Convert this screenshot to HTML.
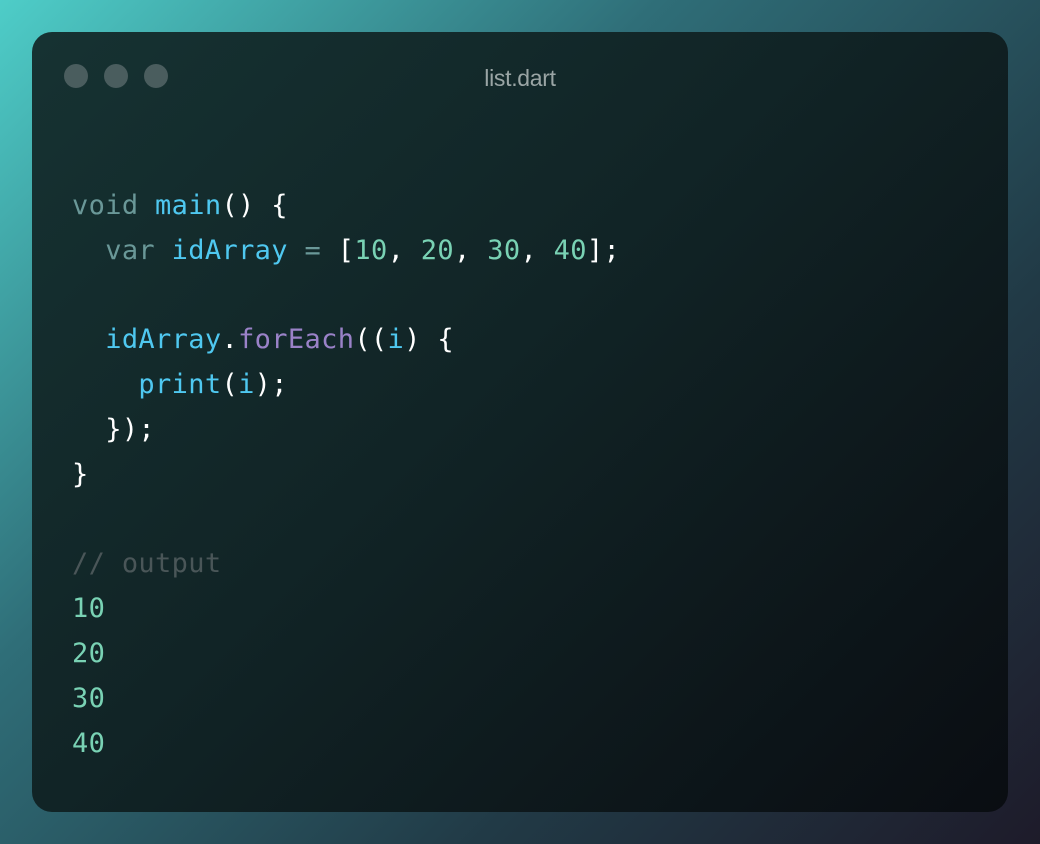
<!DOCTYPE html>
<html><head><style>
html,body{margin:0;padding:0;width:1040px;height:844px;overflow:hidden}
body{background:linear-gradient(135deg,#4ecdc8 0%,#2f6e78 35%,#213a46 70%,#1e1b2a 100%);position:relative}
.win{position:absolute;left:32px;top:32px;width:976px;height:780px;border-radius:20px;background:linear-gradient(135deg,#163232 0%,#112426 45%,#0a0d12 100%)}
.dot{position:absolute;top:32px;width:24px;height:24px;border-radius:50%;background:#4a5d5e}
.title{position:absolute;left:0;right:0;top:33px;text-align:center;font:23px "Liberation Sans",sans-serif;color:#9aa5a5;letter-spacing:-0.3px}
pre{position:absolute;left:40px;top:152px;margin:0;font:27px/44.8px "DejaVu Sans Mono","Liberation Mono",monospace;color:#fff;letter-spacing:0.35px}
.k{color:#6a9898}.f{color:#4fc8f0}.n{color:#79d2b4}.m{color:#9a82c8}.c{color:#4a5658}.o{color:#6a9898}
</style></head><body>
<div class="win">
<div class="dot" style="left:32px"></div><div class="dot" style="left:72px"></div><div class="dot" style="left:112px"></div>
<div class="title">list.dart</div>
<pre><span class="k">void</span> <span class="f">main</span>() {
  <span class="k">var</span> <span class="f">idArray</span> <span class="o">=</span> [<span class="n">10</span>, <span class="n">20</span>, <span class="n">30</span>, <span class="n">40</span>];

  <span class="f">idArray</span>.<span class="m">forEach</span>((<span class="f">i</span>) {
    <span class="f">print</span>(<span class="f">i</span>);
  });
}

<span class="c">// output</span>
<span class="n">10</span>
<span class="n">20</span>
<span class="n">30</span>
<span class="n">40</span></pre>
</div>
</body></html>
